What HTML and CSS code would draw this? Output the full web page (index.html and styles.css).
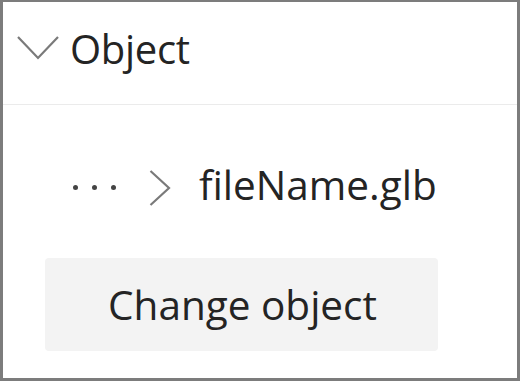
FILE: index.html
```html
<!DOCTYPE html>
<html>
<head>
<meta charset="utf-8">
<link rel="stylesheet" href="styles.css">
</head>
<body>
<div class="frame">
  <div class="header">
    <svg class="chev-down" width="42" height="24" viewBox="0 0 42 24"><path d="M1 1 L21 22 L41 1" fill="none" stroke="#7a7a7a" stroke-width="2.2"/></svg>
    <span class="title">Object</span>
  </div>
  <div class="content">
    <div class="crumb">
      <span class="dots"><i></i><i></i><i></i></span>
      <svg class="chev-right" width="22" height="36" viewBox="0 0 22 36"><path d="M1.5 1 L20 18 L1.5 35" fill="none" stroke="#7a7a7a" stroke-width="2.2"/></svg>
      <span class="file">fileName.glb</span>
    </div>
    <button class="btn">Change object</button>
  </div>
</div>
</body>
</html>
```
FILE: styles.css
```css
html, body { margin: 0; padding: 0; background: #fff; }
.frame {
  box-sizing: border-box;
  width: 520px; height: 381px;
  border-style: solid;
  border-color: #7c7c7c;
  border-width: 2px 3px 3px 3px;
  font-family: "Open Sans", "Noto Sans", sans-serif;
  font-weight: 500;
  color: #242424;
}
.header {
  height: 103px;
  border-bottom: 1px solid #ebebeb;
  display: flex;
  align-items: center;
  padding-left: 14px;
  box-sizing: border-box;
}
.chev-down { margin-top: -10px; }
.title { font-size: 40px; margin-left: 11px; margin-top: -10px; letter-spacing: -0.3px; }
.content { padding: 0 0 0 42px; }
.crumb {
  display: flex; align-items: center;
  height: 153px;
  padding-top: 12px;
  box-sizing: border-box;
}
.dots { display: flex; gap: 14px; margin-left: 28px; }
.dots i { width: 5px; height: 5px; border-radius: 50%; background: #444; display: block; }
.chev-right { margin-left: 33px; }
.file { font-size: 40.5px; margin-left: 28px; margin-top: -6px; }
.btn {
  width: 393px; height: 93px;
  border: none; border-radius: 4px;
  background: #f3f3f3;
  font-family: inherit; font-weight: 500; font-size: 40.5px; color: #242424;
  padding: 0 0 0 2px;
}
```
